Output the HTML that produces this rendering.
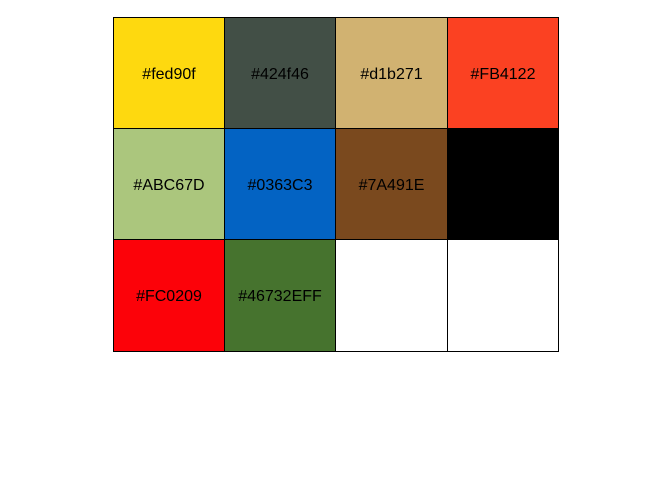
<!DOCTYPE html>
<html><head><style>
body{margin:0;width:672px;height:480px;background:#fff;position:relative;overflow:hidden;font-family:"Liberation Sans",Arial,sans-serif}
.c{position:absolute;box-sizing:border-box;border:1px solid #000;display:flex;align-items:center;justify-content:center;font-size:16px;color:#000;padding-top:3px}
</style></head><body>
<div class="c" style="left:113px;top:17px;width:112px;height:112px;background:#fed90f">#fed90f</div>
<div class="c" style="left:224px;top:17px;width:112px;height:112px;background:#424f46">#424f46</div>
<div class="c" style="left:335px;top:17px;width:113px;height:112px;background:#d1b271">#d1b271</div>
<div class="c" style="left:447px;top:17px;width:112px;height:112px;background:#FB4122">#FB4122</div>
<div class="c" style="left:113px;top:128px;width:112px;height:112px;background:#ABC67D">#ABC67D</div>
<div class="c" style="left:224px;top:128px;width:112px;height:112px;background:#0363C3">#0363C3</div>
<div class="c" style="left:335px;top:128px;width:113px;height:112px;background:#7A491E">#7A491E</div>
<div class="c" style="left:447px;top:128px;width:112px;height:112px;background:#000"></div>
<div class="c" style="left:113px;top:239px;width:112px;height:113px;background:#FC0209">#FC0209</div>
<div class="c" style="left:224px;top:239px;width:112px;height:113px;background:#46732E">#46732EFF</div>
<div class="c" style="left:335px;top:239px;width:113px;height:113px;background:#fff"></div>
<div class="c" style="left:447px;top:239px;width:112px;height:113px;background:#fff"></div>
</body></html>
